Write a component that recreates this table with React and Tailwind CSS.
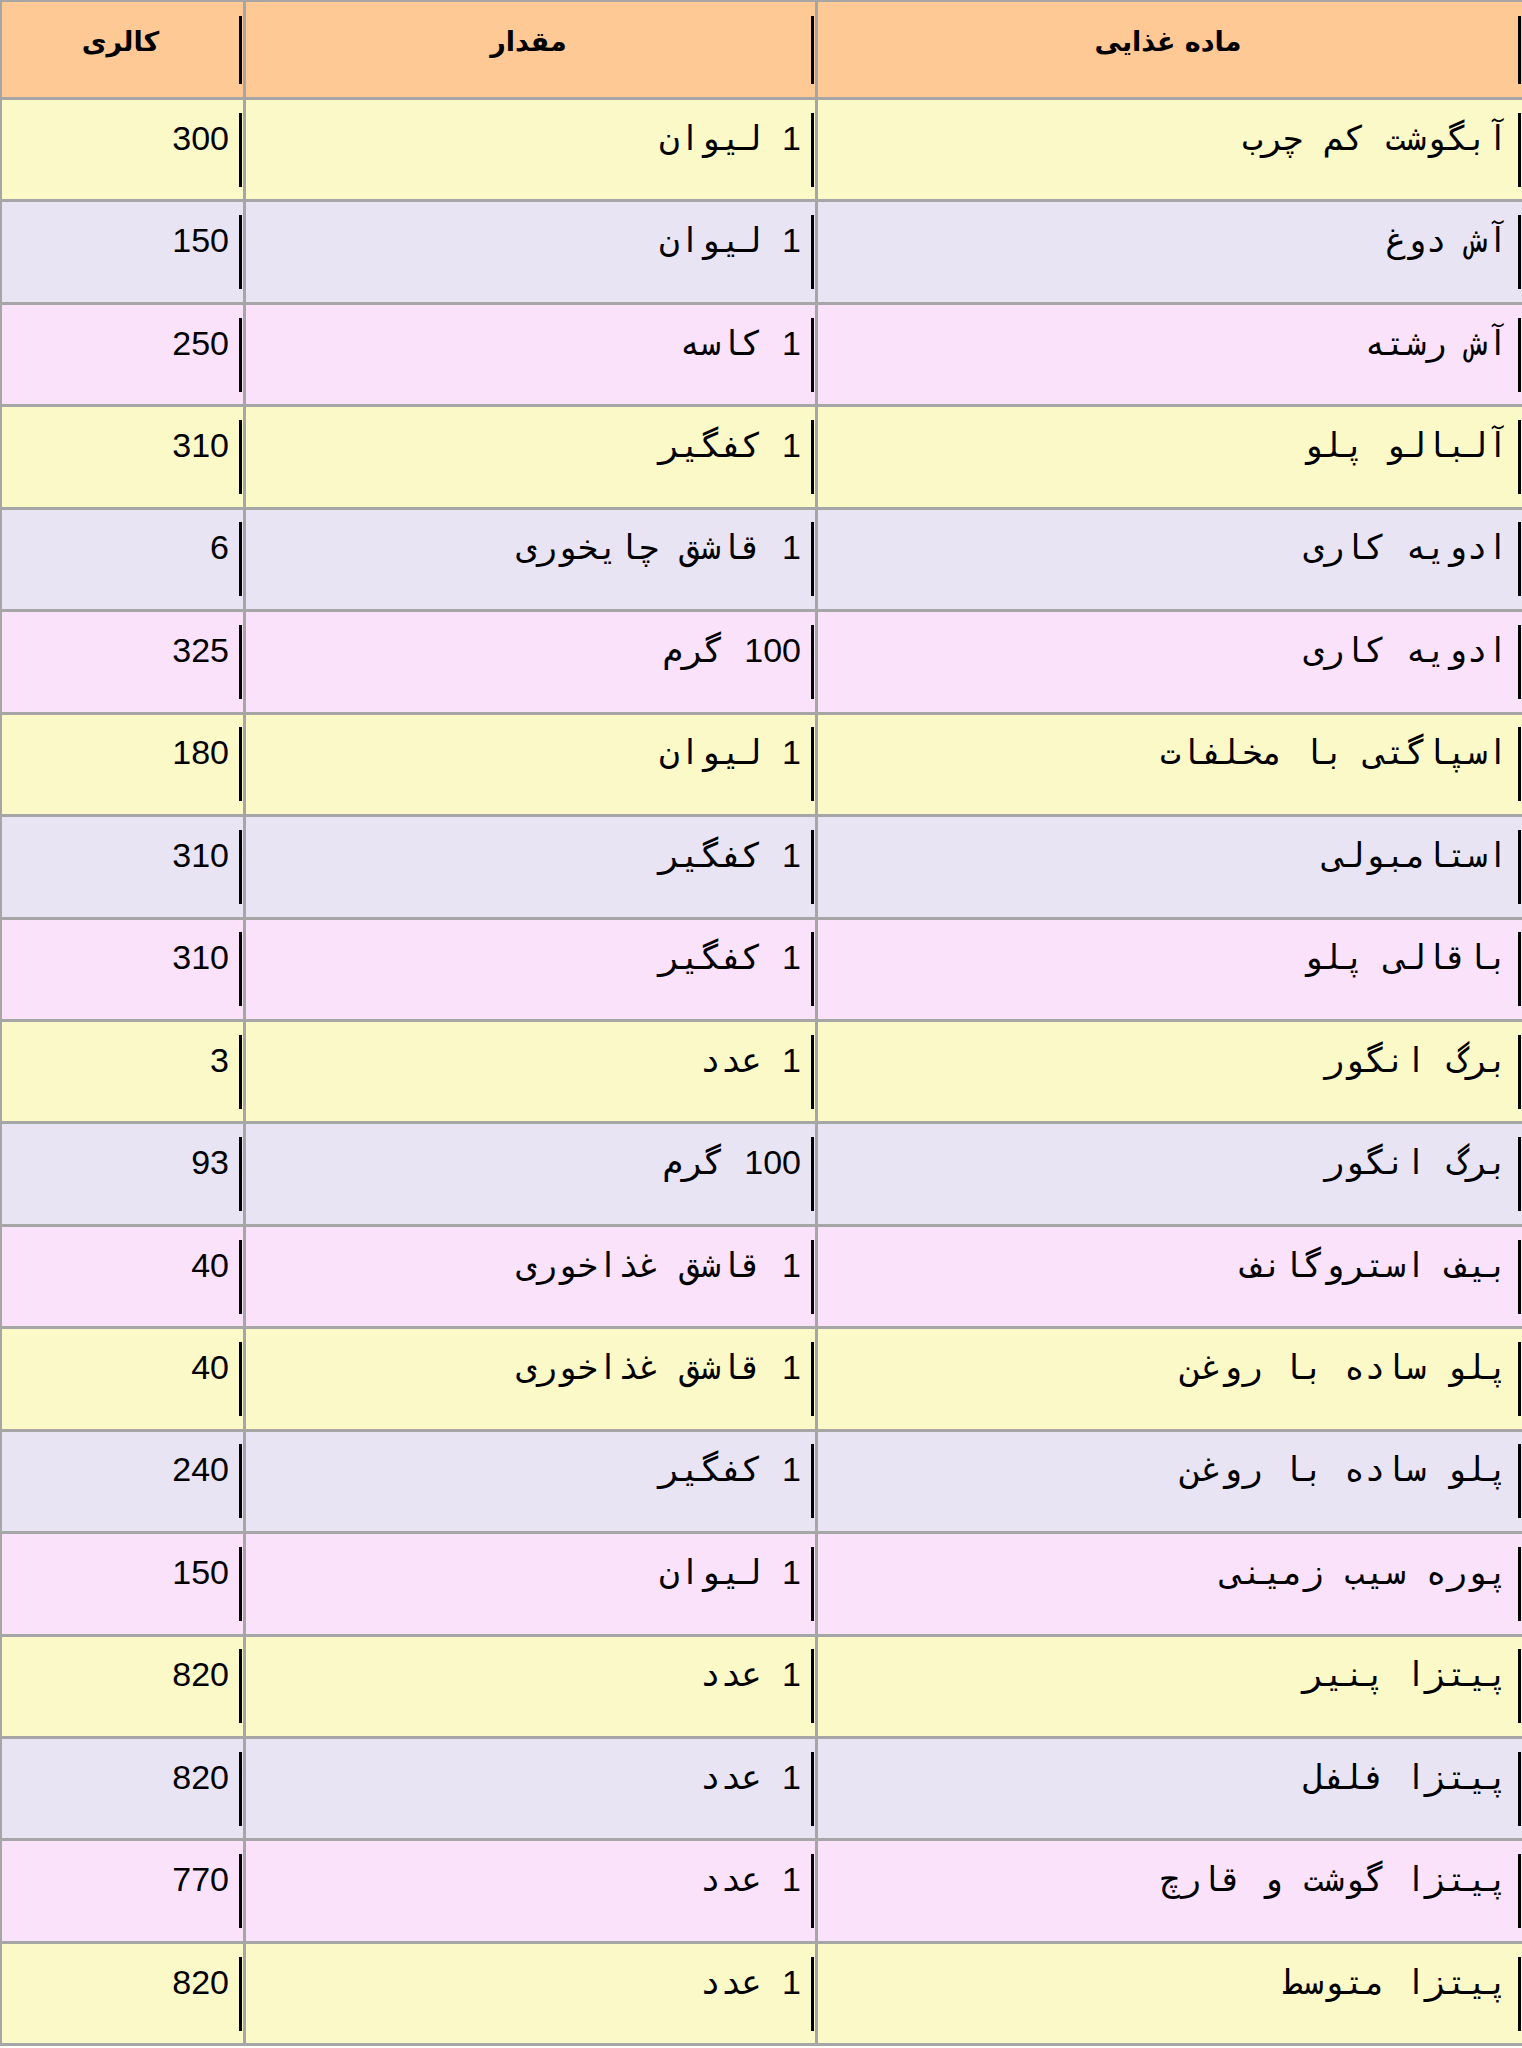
import React from "react";

const rows = [
  ["آبگوشت کم چرب", "1 لیوان", "300"],
  ["آش دوغ", "1 لیوان", "150"],
  ["آش رشته", "1 کاسه", "250"],
  ["آلبالو پلو", "1 کفگیر", "310"],
  ["ادویه کاری", "1 قاشق چایخوری", "6"],
  ["ادویه کاری", "100 گرم", "325"],
  ["اسپاگتی با مخلفات", "1 لیوان", "180"],
  ["استامبولی", "1 کفگیر", "310"],
  ["باقالی پلو", "1 کفگیر", "310"],
  ["برگ انگور", "1 عدد", "3"],
  ["برگ انگور", "100 گرم", "93"],
  ["بیف استروگانف", "1 قاشق غذاخوری", "40"],
  ["پلو ساده با روغن", "1 قاشق غذاخوری", "40"],
  ["پلو ساده با روغن", "1 کفگیر", "240"],
  ["پوره سیب زمینی", "1 لیوان", "150"],
  ["پیتزا پنیر", "1 عدد", "820"],
  ["پیتزا فلفل", "1 عدد", "820"],
  ["پیتزا گوشت و قارچ", "1 عدد", "770"],
  ["پیتزا متوسط", "1 عدد", "820"],
];

const colors = ["bg-[#fcf9c8]", "bg-[#e8e4f4]", "bg-[#fbe2fb]"];

function HeaderCell({ children }) {
  return (
    <div className="bg-[#ffc995] h-[95px] flex items-center pr-[1px]">
      <div className="h-[68px] w-full border-r-[3px] border-black text-center pt-[9px] text-[27px] leading-[34px] font-bold text-black [font-family:'DejaVu_Sans',sans-serif]">
        {children}
      </div>
    </div>
  );
}

function Num({ children }) {
  return <span className="[font-family:'Liberation_Sans',sans-serif]">{children}</span>;
}

function Fa({ children }) {
  return <span className="[font-family:'DejaVu_Sans_Mono',monospace]">{children}</span>;
}

function Content({ text }) {
  const m = text.match(/^(\d+)(.*)$/);
  if (m) {
    return (
      <>
        <Num>{m[1]}</Num>
        {m[2] ? <Fa>{m[2]}</Fa> : null}
      </>
    );
  }
  return <Fa>{text}</Fa>;
}

function Cell({ bg, text }) {
  return (
    <div className={`${bg} h-[99.45px] flex items-center pr-[1px]`}>
      <div className="h-[74px] w-full border-r-[3px] border-black text-right pr-[10px] pt-[3px] text-[34px] leading-[42px] text-black whitespace-pre">
        <Content text={text} />
      </div>
    </div>
  );
}

export default function App() {
  return (
    <div className="w-[1522px] bg-white">
      <div
        dir="rtl"
        className="grid grid-cols-[704px_569px_241px] gap-[3px] bg-[#a6a6a6] pt-[2px] pb-[3px] pl-[2px]"
      >
        <HeaderCell>ماده غذایی</HeaderCell>
        <HeaderCell>مقدار</HeaderCell>
        <HeaderCell>کالری</HeaderCell>
        {rows.map((r, i) => (
          <React.Fragment key={i}>
            <Cell bg={colors[i % 3]} text={r[0]} />
            <Cell bg={colors[i % 3]} text={r[1]} />
            <Cell bg={colors[i % 3]} text={r[2]} />
          </React.Fragment>
        ))}
      </div>
    </div>
  );
}
